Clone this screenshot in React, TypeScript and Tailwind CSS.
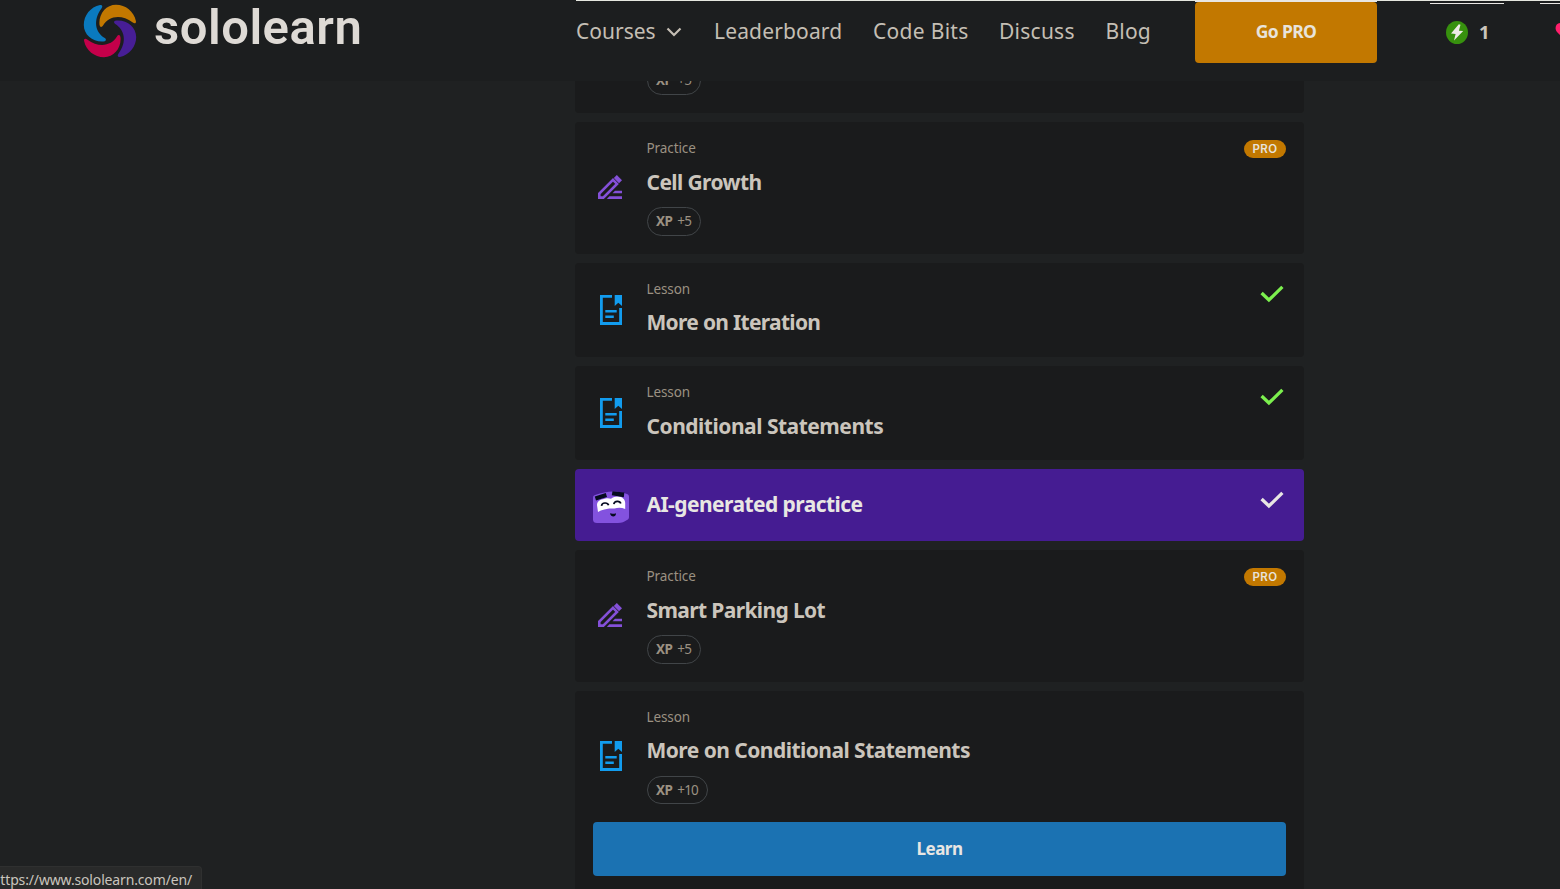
import React from "react";

const sans = "font-['Noto_Sans','Open_Sans',sans-serif]";

function SwirlLogo() {
  const blade = "M-10 -25.9C-19.5 -24 -26.2 -15.5 -26.2 -6C-26.2 3.5 -18 10.6 -8 10.6C-7 10.6 -6 10.5 -5.2 10.2C-3.6 9.6 -3.7 8 -5.2 7.1C-14.5 1.5 -17.5 -10.5 -8.4 -22.8C-7 -24.8 -7.8 -26.3 -10 -25.9Z";
  return (
    <svg width="54" height="54" viewBox="-27 -27 54 54" className="shrink-0">
      <path d={blade} fill="#0a7abf" />
      <path d={blade} fill="#c27800" transform="rotate(90)" />
      <path d={blade} fill="#471e96" transform="rotate(180)" />
      <path d={blade} fill="#c4004a" transform="rotate(270)" />
    </svg>
  );
}

function PencilIcon() {
  return (
    <svg width="24" height="24" viewBox="0 0 24 24" fill="#8450d8" className="mb-[2px] mr-[2px]">
      <path d="M1.3 22.6V18.6L15 4.9L19 8.9L5.3 22.6Z" fill="none" stroke="#8450d8" strokeWidth="2.6" />
      <path d="M18.8 0L24 5.2L21 8.2L15.8 3Z" />
      <path d="M17 15.7H24V18.3H14.5Z" />
      <path d="M11.4 21.3H24V24H8.8Z" />
    </svg>
  );
}

function LessonIcon({ className = "" }: { className?: string }) {
  return (
    <svg width="22" height="30" viewBox="0 0 22 30" className={className}>
      <path d="M12 1.4H1.4V28.5H20.6V13" fill="none" stroke="#129cee" strokeWidth="2.8" />
      <path d="M14.7 0H22V11L18.3 7.8L14.7 11Z" fill="#129cee" />
      <path d="M5.3 16.3H16.7M5.3 21.7H13.8" stroke="#129cee" strokeWidth="2.6" />
    </svg>
  );
}

function CheckIcon({ color }: { color: string }) {
  return (
    <svg width="24" height="18" viewBox="0 0 24 18">
      <path d="M1.6 8L8.9 15L22.4 1.9" fill="none" stroke={color} strokeWidth="3.3" />
    </svg>
  );
}

function Mascot() {
  return (
    <svg width="36" height="32" viewBox="0 0 36 32">
      <path d="M2 4C9 1.8 14 .5 20 .5C26 .5 30 1.5 34 3C35.4 3.5 36 4.4 36 6V26C36 27.5 35.5 28.3 34 29C31 30.8 29 32 25 32H4C1.5 32 0 31 0 28.5V7C0 5.2 .6 4.5 2 4Z" fill="#8352df" />
      <path d="M4 14C4 10.5 7.5 8.2 11 8C12 7.2 15.5 6.8 18 7.8C20 6 22.5 5.3 25 5.4C29 5.6 32.2 8 32.2 12V18C28.5 16.6 25 16.5 21.5 17.6C17 16.9 9 18 5 21Z" fill="#fff" />
      <path d="M1.8 5.4L12.8 2L14 6.1L3 9.6Z" fill="#060b20" />
      <path d="M19.5 .2L31.3 1.6L30.8 6.2L18.8 4.2Z" fill="#060b20" />
      <path d="M8.5 14.8C9 11.4 14.5 11 15.6 14.2M20.8 13.2C21.5 9.8 26.8 9.5 27.8 12.6" fill="none" stroke="#060b20" strokeWidth="1.7" />
      <path d="M17 22.3C18.5 23 21.3 22.9 23 22.2C23 26.6 17.8 26.6 17 22.3Z" fill="#060b20" />
    </svg>
  );
}

function XpPill({ value, height = "h-[29px]" }: { value: string; height?: string }) {
  return (
    <div className={"flex w-fit shrink-0 items-center gap-[5px] rounded-full border border-[#414548] pl-2 pr-[9px] text-[13.5px] tracking-[-0.8px] text-[#9b9182] " + height}>
      <b className="font-bold tracking-[-0.6px]">XP</b>
      <span>{value}</span>
    </div>
  );
}

type CardProps = {
  kind: "Practice" | "Lesson";
  title: string;
  titleClass: string;
  xp?: string;
  pro?: boolean;
  done?: boolean;
  action?: string;
};

function Card({ kind, title, titleClass, xp, pro, done, action }: CardProps) {
  return (
    <div className="shrink-0 rounded bg-[#1a1b1c] px-[18px] pt-[18px]">
      <div className="flex pb-[18px]">
        <div className="flex w-9 shrink-0 items-center justify-center">
          {kind === "Practice" ? <PencilIcon /> : <LessonIcon className={action ? "mb-[2px]" : ""} />}
        </div>
        <div className="ml-[17.5px] flex-1">
          <div className="h-[17px] text-[13.5px] leading-[16px] tracking-[-0.1px] text-[#9b9182]">{kind}</div>
          <div className={"mt-[9px] h-[31px] whitespace-nowrap text-[21px] font-bold text-[#cbc5bc] " + titleClass}>{title}</div>
          {xp ? (
            <div className="ml-[0.5px] mt-[10px]">
              <XpPill value={xp} height={action ? "h-[28px]" : "h-[29px]"} />
            </div>
          ) : (
            <div className="h-px" />
          )}
        </div>
        {pro && (
          <div className="flex h-[18px] w-[42px] items-center justify-center rounded-full bg-[#c27800] pt-px font-['Inter',sans-serif] text-[11.5px] font-semibold tracking-[0.4px] text-[#e8e3db]">PRO</div>
        )}
        {done && <div className="mr-[2px] mt-1"><CheckIcon color="#7cf04e" /></div>}
      </div>
      {action && (
        <button className="mb-[18px] flex h-[54px] w-full items-center justify-center rounded bg-[#1b72b2] text-[17px] font-bold tracking-[-0.5px] text-[#e8e6e3]">{action}</button>
      )}
    </div>
  );
}

function Header() {
  return (
    <header className="relative flex h-[81px] shrink-0 items-start overflow-hidden bg-[#1c1e1f]">
      <div className="flex w-[576px] shrink-0 items-center pl-[83px] pt-1">
        <SwirlLogo />
        <span className="-mt-[6px] ml-[17px] font-['Roboto',sans-serif] text-[49px] font-semibold leading-[58px] tracking-[0.5px] text-[#dedad5]">sololearn</span>
      </div>
      <nav className="flex h-[64px] w-[619px] shrink-0 items-center text-[21px] text-[#c4beb4]">
        <span className="flex w-[138px] items-center">
          Courses
          <svg width="16" height="11" viewBox="0 0 16 11" className="ml-[10px] mt-px">
            <path d="M1.5 1.5L8 8L14.5 1.5" fill="none" stroke="#c4beb4" strokeWidth="2.2" />
          </svg>
        </span>
        <span className="w-[159px] tracking-[0.15px]">Leaderboard</span>
        <span className="w-[126px] tracking-[0.3px]">Code Bits</span>
        <span className="w-[106.5px] tracking-[0.25px]">Discuss</span>
        <span className="tracking-[0.2px]">Blog</span>
      </nav>
      <button className="mt-[2px] flex h-[61px] w-[182px] shrink-0 items-center justify-center rounded bg-[#c27800] pb-[2px] text-[17.5px] font-bold tracking-[-0.65px] text-[#e8e3db]">Go PRO</button>
      <div className="ml-[69px] flex h-[64px] shrink-0 items-center">
        <svg width="22" height="23" viewBox="0 0 22 23">
          <ellipse cx="11" cy="11.5" rx="11" ry="11.5" fill="#37910e" />
          <path d="M12.8 3.3L5 12.6L9.6 13.1L8 19.6L17.2 10.1L12.9 9.7L14.5 3.7Z" fill="#eeebe6" />
        </svg>
        <span className="mb-px ml-[11px] w-[76px] text-[18.5px] font-bold text-[#cbc5bc]">1</span>
        <svg width="22" height="20" viewBox="0 0 22 20" className="-mt-px">
          <path d="M11 19L2 10C-1 6 1 1 5.5 1C8 1 10 2 11 4C12 2 14 1 16.5 1C21 1 23 6 20 10Z" fill="#ff1f6b" />
        </svg>
      </div>
      <div className="absolute left-[576px] right-0 top-0 h-px bg-[#e5e7df]" />
      <div className="absolute left-[1195px] top-0 h-[2px] w-[182px] bg-[#e8e6e3]" />
      <div className="absolute left-[1430px] top-[3px] h-px w-[74px] bg-[#e8e6e3]" />
      <div className="absolute left-[1540px] top-[3px] h-px w-5 bg-[#e8e6e3]" />
    </header>
  );
}

export default function App() {
  return (
    <div className={"relative flex h-[889px] w-[1560px] flex-col overflow-hidden bg-[#1f2122] " + sans}>
      <Header />
      <main className="ml-[575px] flex min-h-0 w-[729px] flex-1 flex-col gap-[9px] overflow-hidden">
        <div className="flex h-8 shrink-0 flex-col justify-end overflow-hidden rounded-b bg-[#1a1b1c] pb-[18px] pl-[72px]">
          <XpPill value="+5" />
        </div>
        <Card kind="Practice" title="Cell Growth" titleClass="leading-[32px] tracking-[-0.6px]" xp="+5" pro />
        <Card kind="Lesson" title="More on Iteration" titleClass="leading-[30px] tracking-[-0.7px]" done />
        <Card kind="Lesson" title="Conditional Statements" titleClass="leading-[32px] tracking-[-0.49px]" done />
        <div className="flex h-[72px] shrink-0 items-center rounded bg-[#451c92] pl-[18px] pr-5">
          <div className="mt-[3px]"><Mascot /></div>
          <div className="ml-[17.5px] flex-1 text-[21px] font-bold tracking-[-0.56px] text-[#e8e6e3]">AI-generated practice</div>
          <div className="-mt-[10px]"><CheckIcon color="#e8e6e3" /></div>
        </div>
        <Card kind="Practice" title="Smart Parking Lot" titleClass="leading-[32px] tracking-[-0.63px]" xp="+5" pro />
        <Card kind="Lesson" title="More on Conditional Statements" titleClass="leading-[30px] tracking-[-0.54px]" xp="+10" action="Learn" />
      </main>
      <div className="absolute bottom-0 left-0 flex h-[23px] w-[202px] items-center justify-end overflow-hidden rounded-tr border-r border-t border-[#2f3030] bg-[#292a2a] pr-[9px] pt-[2px] text-[14px] text-[#c9c5be]">
        <span className="whitespace-nowrap tracking-[-0.15px]">ttps://www.sololearn.com/en/</span>
      </div>
    </div>
  );
}
